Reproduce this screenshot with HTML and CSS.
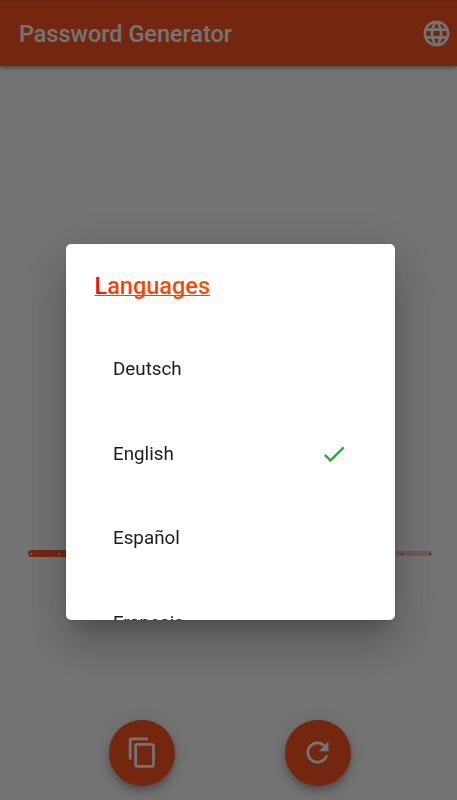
FILE: index.html
```html
<!DOCTYPE html>
<html lang="en">

<head>
    <meta charset="UTF-8">
    <title>Password Generator</title>
    <link rel="stylesheet" href="styles.css">
</head>

<body>
<div class="app">
  <div class="nav">
    <span class="title">Password Generator</span>
    <svg class="globe" viewBox="0 0 24 24"><path d="M11.99 2C6.47 2 2 6.48 2 12s4.47 10 9.99 10C17.52 22 22 17.52 22 12S17.52 2 11.99 2zm6.93 6h-2.95c-.32-1.25-.78-2.45-1.38-3.56 1.84.63 3.37 1.91 4.33 3.56zM12 4.04c.83 1.2 1.48 2.53 1.91 3.96h-3.82c.43-1.43 1.08-2.76 1.91-3.96zM4.26 14C4.1 13.36 4 12.69 4 12s.1-1.36.26-2h3.38c-.08.66-.14 1.32-.14 2s.06 1.34.14 2H4.26zm.82 2h2.95c.32 1.25.78 2.45 1.38 3.56-1.84-.63-3.37-1.9-4.33-3.56zm2.95-8H5.08c.96-1.66 2.49-2.93 4.33-3.56C8.81 5.55 8.35 6.75 8.03 8zM12 19.96c-.83-1.2-1.48-2.53-1.91-3.96h3.82c-.43 1.43-1.08 2.76-1.91 3.96zM14.34 14H9.66c-.09-.66-.16-1.32-.16-2s.07-1.35.16-2h4.68c.09.65.16 1.32.16 2s-.07 1.34-.16 2zm.25 5.56c.6-1.11 1.06-2.31 1.38-3.56h2.95c-.96 1.65-2.49 2.93-4.33 3.56zM16.36 14c.08-.66.14-1.32.14-2s-.06-1.34-.14-2h3.38c.16.64.26 1.31.26 2s-.1 1.36-.26 2h-3.38z"/></svg>
  </div>

  <div class="slider">
    <div class="active"><i></i><i></i></div>
    <div class="rest"><i></i><i></i></div>
  </div>

  <div class="buttons">
    <div class="fab">
      <svg viewBox="0 0 24 24"><path d="M16 1H4c-1.100 0-2 .9-2 2v14h2V3h12V1zm3 4H8c-1.100 0-2 .9-2 2v14c0 1.100.9 2 2 2h11c1.100 0 2-.9 2-2V7c0-1.100-.9-2-2-2zm0 16H8V7h11v14z"/></svg>
    </div>
    <div class="fab">
      <svg viewBox="0 0 24 24"><path d="M17.650 6.350C16.200 4.900 14.210 4 12 4c-4.420 0-7.990 3.580-7.990 8s3.570 8 7.990 8c3.730 0 6.840-2.550 7.730-6h-2.080c-.82 2.330-3.040 4-5.650 4-3.310 0-6-2.690-6-6s2.690-6 6-6c1.660 0 3.140.69 4.220 1.780L13 11h7V4l-2.350 2.350z"/></svg>
    </div>
  </div>
</div>

<div class="overlay">
  <div class="dialog">
    <h2><span>Languages</span></h2>
    <ul>
      <li>Deutsch</li>
      <li>English
        <svg class="check" viewBox="0 0 24 24"><path d="M9 16.170L4.830 12l-1.420 1.410L9 19 21 7l-1.410-1.410z"/></svg>
      </li>
      <li>Español</li>
      <li>Français</li>
    </ul>
  </div>
</div>
</body>
</html>
```

FILE: styles.css
```css
* {
    box-sizing: border-box;
}

body {
    margin: 0;
    font-family: Roboto, sans-serif;
}

.app {
    height: 800px;
    display: flex;
    flex-direction: column;
    background: #fff;
    overflow: hidden;
}

.nav {
    height: 66px;
    padding: 0 5.5px 0 19px;
    display: flex;
    align-items: center;
    justify-content: space-between;
    background: #ff5722;
    border-top: 1px solid #e64e1f;
    box-shadow: 0 2px 5px rgba(0, 0, 0, .4);
}

.title {
    color: #fff;
    font-size: 23.45px;
    font-weight: 500;
}

.globe {
    width: 31px;
    height: 31px;
    fill: #fff;
}

.slider {
    display: flex;
    align-items: center;
    margin: 484px 25px 0 28px;
    height: 7px;
}

.slider div {
    display: flex;
    align-items: center;
    justify-content: space-between;
}

.slider i {
    width: 2px;
    height: 2px;
}

.active {
    width: 67px;
    height: 7px;
    padding: 0 35px 0 2px;
    border-radius: 4px 0 0 4px;
    background: #ff5722;
}

.active i {
    background: #ffcdbc;
}

.rest {
    flex: 1;
    height: 5px;
    padding: 0 1px 0 306px;
    border-radius: 0 3px 3px 0;
    background: #ffc5b3;
}

.rest i {
    background: #ff5722;
}

.buttons {
    display: flex;
    justify-content: center;
    gap: 110px;
    margin-top: 163px;
    padding-left: 3px;
}

.fab {
    width: 65.6px;
    height: 65.6px;
    border-radius: 50%;
    display: flex;
    align-items: center;
    justify-content: center;
    background: #ff5722;
    box-shadow: 0 4px 6px -1px rgba(0, 0, 0, .2), 0 7px 12px rgba(0, 0, 0, .14), 0 1px 21px rgba(0, 0, 0, .12);
}

.fab svg {
    width: 33px;
    height: 33px;
    fill: #fff;
}

.overlay {
    position: fixed;
    top: 0;
    left: 0;
    right: 0;
    bottom: 0;
    padding: 243.5px 62px 0 66px;
    background: rgba(0, 0, 0, .545);
}

.dialog {
    height: 376.5px;
    padding: 27.5px 28px 0 28.5px;
    border-radius: 5px;
    background: #fff;
    overflow: hidden;
    box-shadow: 0 0 1px rgba(0, 0, 0, .5), 0 13px 18px -8px rgba(0, 0, 0, .2), 0 28px 45px 4px rgba(0, 0, 0, .14), 0 11px 54px 9px rgba(0, 0, 0, .12);
}

.dialog h2 {
    margin: 0;
    height: 56px;
    font-size: 23.5px;
    font-weight: 500;
    line-height: 30px;
}

.dialog h2 span {
    color: transparent;
    background: linear-gradient(90deg, #ff0000, #ff3d00 15%, #ff4a00);
    -webkit-background-clip: text;
    background-clip: text;
    text-decoration: underline;
    text-decoration-color: #ff3d00;
    text-decoration-thickness: 1px;
    text-decoration-skip-ink: none;
}

.dialog ul {
    margin: 0;
    padding: 0 19px 0 18.5px;
    list-style: none;
}

.dialog li {
    height: 84.5px;
    display: flex;
    align-items: center;
    justify-content: space-between;
    color: #1c1c1c;
    font-size: 18.8px;
}

.check {
    width: 28px;
    height: 28px;
    fill: #27ae36;
}
```
